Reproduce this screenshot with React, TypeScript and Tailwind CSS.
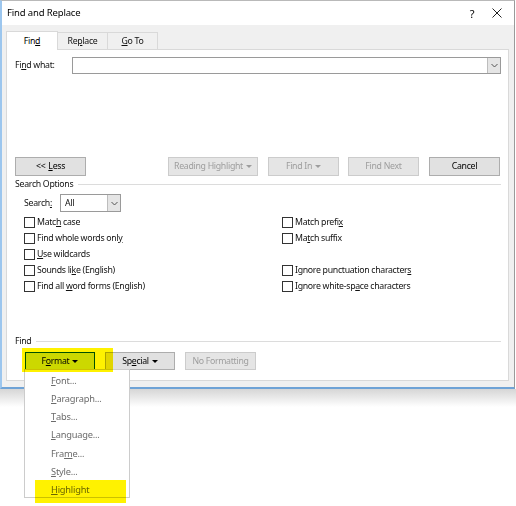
import React from 'react';

const Btn = ({ children, w, disabled }: { children: React.ReactNode; w: string; disabled?: boolean }) => (
    <div
        className={`${w} h-full flex items-center justify-center border ${
            disabled ? 'border-[#cccccc] bg-[#e5e5e5] text-[#9d9d9d]' : 'border-[#adadad] bg-[#e1e1e1] text-black'
        }`}
    >
        {children}
    </div>
);

const Caret = () => <span className="inline-block ml-[3px] align-middle border-x-[3px] border-x-transparent border-t-[3px] border-t-current" />;

const Chevron = () => (
    <svg width="7" height="5" viewBox="0 0 7 5" className="text-[#555]">
        <path d="M0.5 1 L3.5 4 L6.5 1" fill="none" stroke="currentColor" strokeWidth="1" />
    </svg>
);

const Check = ({ children }: { children: React.ReactNode }) => (
    <div className="h-[16px] flex items-center">
        <div className="w-[11px] h-[11px] border border-[#333] bg-white mr-[2px]" />
        <span>{children}</span>
    </div>
);

export default function App() {
    const menu = [
        <><u>F</u>ont...</>,
        <><u>P</u>aragraph...</>,
        <><u>T</u>abs...</>,
        <><u>L</u>anguage...</>,
        <>Fra<u>m</u>e...</>,
        <><u>S</u>tyle...</>,
        <><u>H</u>ighlight</>,
    ];

    return (
        <div className="relative w-[516px] h-[506px] bg-white overflow-hidden text-[8.75px] leading-none text-[#111] font-['Noto_Sans',sans-serif] tracking-[-0.3px]">
            {/* dialog window */}
            <div className="w-[515px] h-[389px] flex flex-col border-l-2 border-l-[#9cc6ee] border-r border-r-[#9a9a9a] border-b-2 border-b-[#6fa3d6] border-t border-t-[#b9b9b9]">
                <div className="h-[24px] bg-white flex items-center pl-[5px] pr-[12px] text-[9.5px] tracking-[-0.15px] text-black">
                    <span className="flex-1">Find and Replace</span>
                    <span className="w-[36px] text-center text-[11px]">?</span>
                    <svg width="10" height="10" viewBox="0 0 10 10" className="ml-[2px]">
                        <path d="M0.5 0.5 L9.5 9.5 M9.5 0.5 L0.5 9.5" stroke="#222" strokeWidth="1" />
                    </svg>
                </div>
                <div className="flex-1 bg-[#f0f0f0] flex flex-col pl-[4px] pr-[5px] pt-[6px] pb-[6px]">
                    {/* tabs */}
                    <div className="flex items-end h-[18px]">
                        <div className="relative z-10 -mb-px w-[52px] h-[19px] bg-white border border-b-0 border-[#d9d9d9] flex items-center justify-center text-black">
                            Fin<u>d</u>
                        </div>
                        <div className="w-[50px] h-[17px] border border-l-0 border-b-0 border-[#d9d9d9] flex items-center justify-center">
                            Re<u>p</u>lace
                        </div>
                        <div className="w-[50px] h-[17px] border border-l-0 border-b-0 border-[#d9d9d9] flex items-center justify-center">
                            <u>G</u>o To
                        </div>
                    </div>
                    {/* panel */}
                    <div className="flex-1 bg-white border border-[#d9d9d9] pl-[8px] pr-[7px] pt-[7px]">
                        <div className="flex items-center h-[17px]">
                            <span className="w-[57px]">Fi<u>n</u>d what:</span>
                            <div className="flex-1 h-full border border-[#9a9a9a] flex justify-end">
                                <div className="w-[13px] h-full bg-[#e5e5e5] border-l border-[#bdbdbd] flex items-center justify-center">
                                    <Chevron />
                                </div>
                            </div>
                        </div>

                        <div className="flex h-[19px] mt-[83px]">
                            <Btn w="w-[71px]">&lt;&lt; <u className="ml-[3px]">L</u>ess</Btn>
                            <div className="w-[82px]" />
                            <Btn w="w-[90px]" disabled>Reading Highlight<Caret /></Btn>
                            <div className="w-[10px]" />
                            <Btn w="w-[71px]" disabled>Find In<Caret /></Btn>
                            <div className="w-[9px]" />
                            <Btn w="w-[71px]" disabled>Find Next</Btn>
                            <div className="w-[10px]" />
                            <Btn w="w-[71px]">Cancel</Btn>
                        </div>

                        <div className="flex items-center h-[12px] mt-[2px]">
                            <span>Search Options</span>
                            <div className="flex-1 h-px bg-[#dcdcdc] ml-[5px]" />
                        </div>

                        <div className="flex items-center h-[18px] mt-[4px] pl-[9px]">
                            <span className="w-[36px]">Search<u>:</u></span>
                            <div className="w-[61px] h-full border border-[#9a9a9a] flex items-center">
                                <span className="flex-1 pl-[4px]">All</span>
                                <div className="w-[13px] h-full bg-[#e5e5e5] border-l border-[#bdbdbd] flex items-center justify-center">
                                    <Chevron />
                                </div>
                            </div>
                        </div>

                        <div className="flex mt-[2px] pl-[9px]">
                            <div className="w-[258px] flex flex-col">
                                <Check>Matc<u>h</u> case</Check>
                                <Check>Find whole words onl<u>y</u></Check>
                                <Check><u>U</u>se wildcards</Check>
                                <Check>Sounds li<u>k</u>e (English)</Check>
                                <Check>Find all <u>w</u>ord forms (English)</Check>
                            </div>
                            <div className="flex flex-col">
                                <Check>Match prefi<u>x</u></Check>
                                <Check>Ma<u>t</u>ch suffix</Check>
                                <div className="h-[16px]" />
                                <Check>Ignore punctuation character<u>s</u></Check>
                                <Check>Ignore white-sp<u>a</u>ce characters</Check>
                            </div>
                        </div>

                        <div className="flex items-center h-[12px] mt-[41px]">
                            <span>Find</span>
                            <div className="flex-1 h-px bg-[#dcdcdc] ml-[5px]" />
                        </div>

                        <div className="flex h-[18px] mt-[5px] pl-[10px]">
                            <div className="w-[70px] h-full flex items-center justify-center border border-[#005499] bg-[#cce4f7] text-black">
                                F<u>o</u>rmat<Caret />
                            </div>
                            <div className="w-[10px]" />
                            <Btn w="w-[70px]">Sp<u>e</u>cial<Caret /></Btn>
                            <div className="w-[10px]" />
                            <Btn w="w-[71px]" disabled>No Formatting</Btn>
                        </div>
                    </div>
                </div>
            </div>
            {/* shadow under window */}
            <div className="h-[18px] bg-gradient-to-b from-[#d6d6d6] to-white" />

            {/* format dropdown menu */}
            <div className="absolute left-[24px] top-[369px] w-[106px] h-[129px] bg-white border border-[#cccccc] pt-[1px] text-[9.25px] tracking-[-0.2px] text-[#6b6b6b]">
                {menu.map((m, i) => (
                    <div key={i} className="h-[18.3px] flex items-center pl-[26px]">
                        {m}
                    </div>
                ))}
            </div>

            {/* yellow highlighter marks */}
            <div className="absolute left-[22px] top-[348px] w-[91px] h-[24px] bg-[#fff200] mix-blend-multiply" />
            <div className="absolute left-[35px] top-[480px] w-[91px] h-[23px] bg-[#fff200] mix-blend-multiply" />
        </div>
    );
}
